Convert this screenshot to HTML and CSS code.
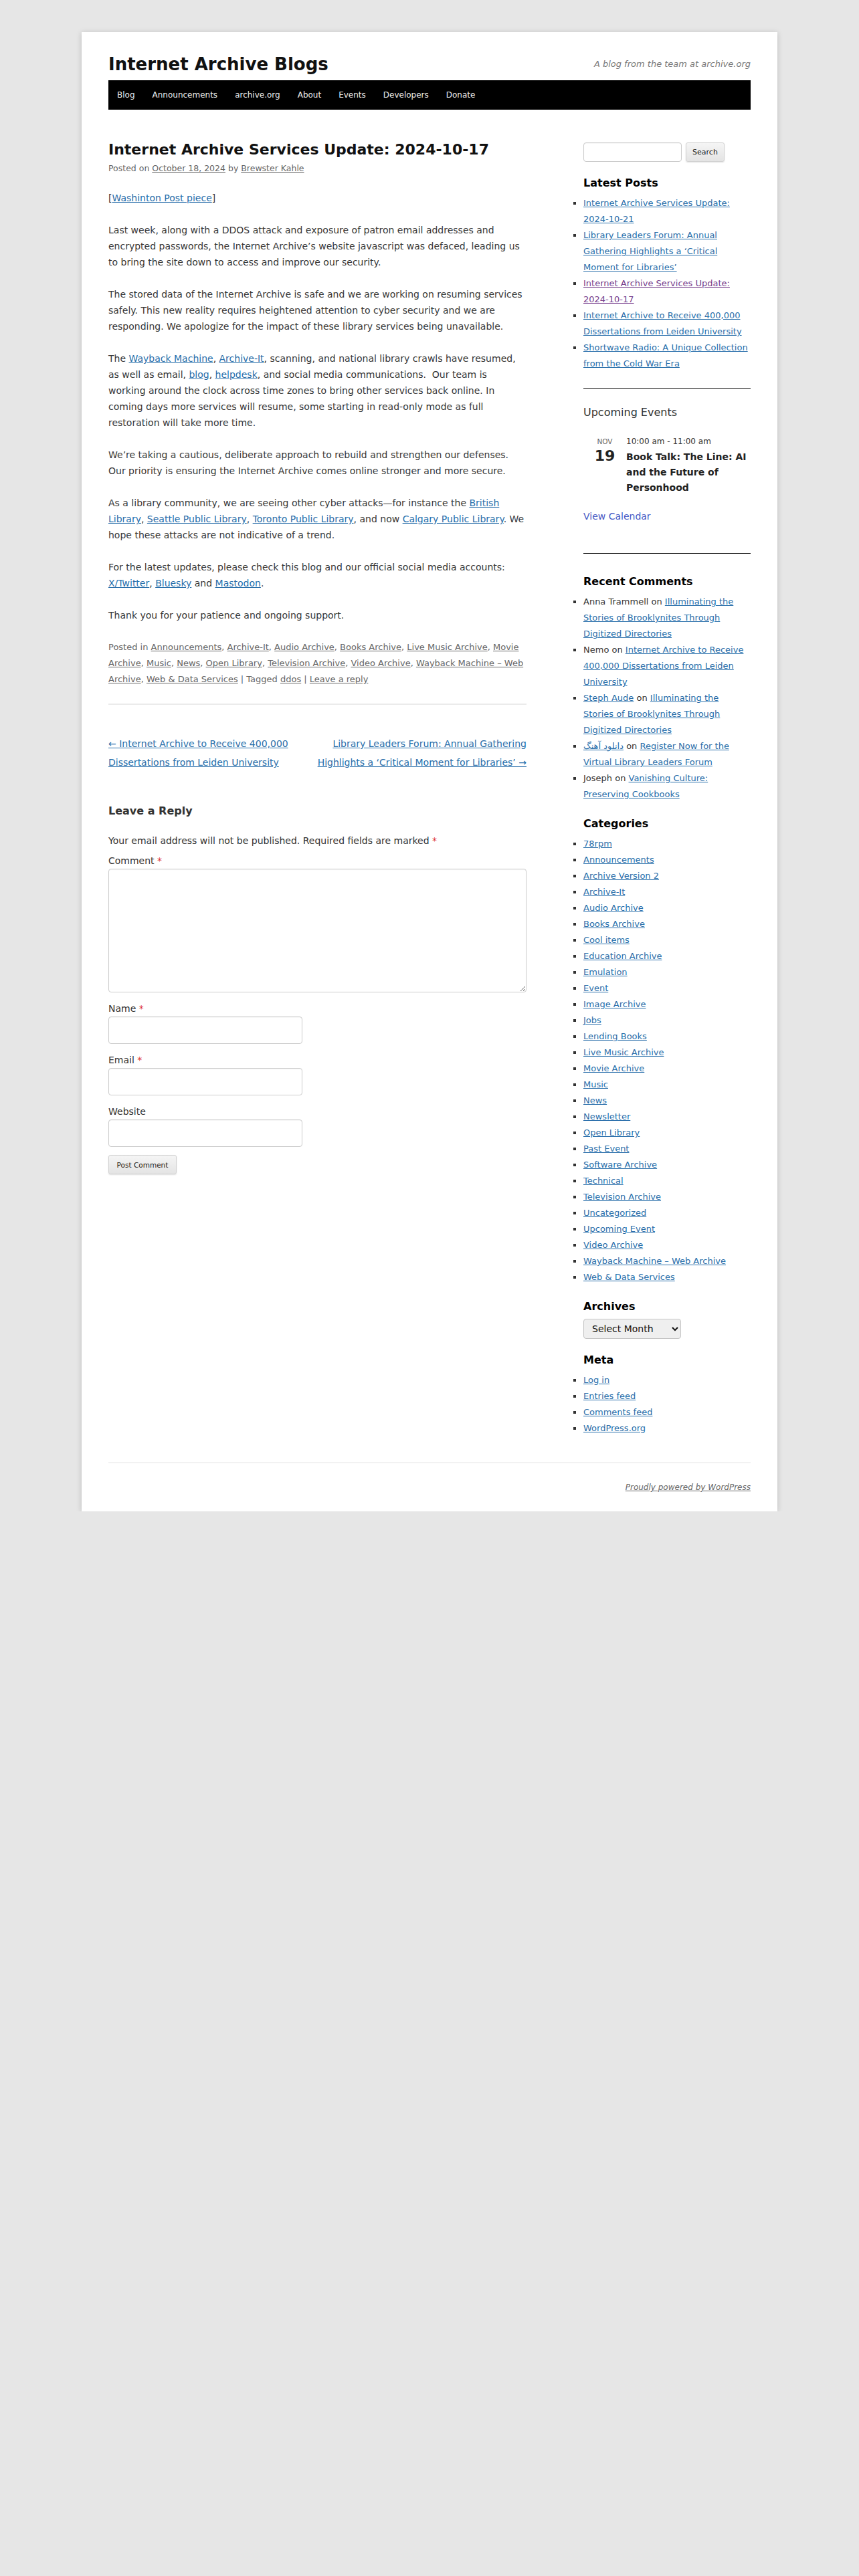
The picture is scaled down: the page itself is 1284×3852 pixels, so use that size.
FILE: index.html
```html
<!DOCTYPE html>
<html lang="en">
<head>
    <meta charset="UTF-8">
    <meta name="viewport" content="width=device-width, initial-scale=1.0">
    <title>Internet Archive Services Update: 2024-10-17 | Internet Archive Blogs</title>
    <link rel="stylesheet" href="styles.css">
</head>
<body>

<div class="page">
    <header class="site-header">
        <div class="branding">
            <h1 class="site-title"><a href="#">Internet Archive Blogs</a></h1>
            <p class="site-description">A blog from the team at archive.org</p>
        </div>
        <nav class="access">
            <ul class="menu">
                <li><a href="#">Blog</a></li>
                <li><a href="#">Announcements</a></li>
                <li><a href="#">archive.org</a></li>
                <li><a href="#">About</a></li>
                <li><a href="#">Events</a></li>
                <li><a href="#">Developers</a></li>
                <li><a href="#">Donate</a></li>
            </ul>
        </nav>
    </header>

    <div class="main">
        <div class="primary">
            <article class="post">
                <header class="entry-header">
                    <h2 class="entry-title">Internet Archive Services Update: 2024-10-17</h2>
                    <div class="entry-meta">Posted on <a href="#">October 18, 2024</a> by <a href="#">Brewster Kahle</a></div>
                </header>

                <div class="entry-content">
                    <p>[<a href="#">Washinton Post piece</a>]</p>
                    <p>Last week, along with a DDOS attack and exposure of patron email addresses and encrypted passwords, the Internet Archive&#8217;s website javascript was defaced, leading us to bring the site down to access and improve our security.</p>
                    <p>The stored data of the Internet Archive is safe and we are working on resuming services safely. This new reality requires heightened attention to cyber security and we are responding. We apologize for the impact of these library services being unavailable.</p>
                    <p>The <a href="#">Wayback Machine</a>, <a href="#">Archive-It</a>, scanning, and national library crawls have resumed, as well as email, <a href="#">blog</a>, <a href="#">helpdesk</a>, and social media communications.&nbsp; Our team is working around the clock across time zones to bring other services back online. In coming days more services will resume, some starting in read-only mode as full restoration will take more time.</p>
                    <p>We&#8217;re taking a cautious, deliberate approach to rebuild and strengthen our defenses. Our priority is ensuring the Internet Archive comes online stronger and more secure.</p>
                    <p>As a library community, we are seeing other cyber attacks&#8212;for instance the <a href="#">British Library</a>, <a href="#">Seattle Public Library</a>, <a href="#">Toronto Public Library</a>, and now <a href="#">Calgary Public Library</a>. We hope these attacks are not indicative of a trend.</p>
                    <p>For the latest updates, please check this blog and our official social media accounts: <a href="#">X/Twitter</a>, <a href="#">Bluesky</a> and <a href="#">Mastodon</a>.</p>
                    <p>Thank you for your patience and ongoing support.</p>
                </div>

                <footer class="entry-footer">
                    Posted in <a href="#">Announcements</a>, <a href="#">Archive-It</a>, <a href="#">Audio Archive</a>, <a href="#">Books Archive</a>, <a href="#">Live Music Archive</a>, <a href="#">Movie Archive</a>, <a href="#">Music</a>, <a href="#">News</a>, <a href="#">Open Library</a>, <a href="#">Television Archive</a>, <a href="#">Video Archive</a>, <a href="#">Wayback Machine &#8211; Web Archive</a>, <a href="#">Web &amp; Data Services</a> | Tagged <a href="#">ddos</a> | <a href="#">Leave a reply</a>
                </footer>
            </article>

            <nav class="nav-single">
                <div class="nav-previous"><a href="#">&larr; Internet Archive to Receive 400,000 Dissertations from Leiden University</a></div>
                <div class="nav-next"><a href="#">Library Leaders Forum: Annual Gathering Highlights a &#8216;Critical Moment for Libraries&#8217; &rarr;</a></div>
            </nav>

            <div class="respond">
                <h3 class="reply-title">Leave a Reply</h3>
                <form class="comment-form">
                    <p class="comment-notes">Your email address will not be published. Required fields are marked <span class="required">*</span></p>
                    <div class="field">
                        <label for="comment">Comment <span class="required">*</span></label>
                        <textarea id="comment" class="comment-box"></textarea>
                    </div>
                    <div class="field">
                        <label for="author">Name <span class="required">*</span></label>
                        <input type="text" id="author" class="text-input">
                    </div>
                    <div class="field">
                        <label for="email">Email <span class="required">*</span></label>
                        <input type="email" id="email" class="text-input">
                    </div>
                    <div class="field">
                        <label for="url">Website</label>
                        <input type="url" id="url" class="text-input">
                    </div>
                    <button type="submit" class="btn post-comment">Post Comment</button>
                </form>
            </div>
        </div>

        <aside class="secondary">
            <form class="search-form">
                <input type="text" class="search-field">
                <button type="submit" class="btn search-submit">Search</button>
            </form>

            <div class="widget">
                <h3 class="widget-title">Latest Posts</h3>
                <ul>
                    <li><a href="#">Internet Archive Services Update: 2024-10-21</a></li>
                    <li><a href="#">Library Leaders Forum: Annual Gathering Highlights a &#8216;Critical Moment for Libraries&#8217;</a></li>
                    <li><a href="#" class="visited">Internet Archive Services Update: 2024-10-17</a></li>
                    <li><a href="#">Internet Archive to Receive 400,000 Dissertations from Leiden University</a></li>
                    <li><a href="#">Shortwave Radio: A Unique Collection from the Cold War Era</a></li>
                </ul>
            </div>

            <div class="widget events-widget">
                <h3 class="events-title">Upcoming Events</h3>
                <div class="event">
                    <div class="event-date">
                        <div class="event-month">Nov</div>
                        <div class="event-day">19</div>
                    </div>
                    <div class="event-info">
                        <div class="event-time">10:00 am - 11:00 am</div>
                        <div class="event-name">Book Talk: The Line: AI and the Future of Personhood</div>
                    </div>
                </div>
                <a href="#" class="view-calendar">View Calendar</a>
            </div>

            <div class="widget">
                <h3 class="widget-title">Recent Comments</h3>
                <ul class="comments-list">
                    <li>Anna Trammell on <a href="#">Illuminating the Stories of Brooklynites Through Digitized Directories</a></li>
                    <li>Nemo on <a href="#">Internet Archive to Receive 400,000 Dissertations from Leiden University</a></li>
                    <li><a href="#">Steph Aude</a> on <a href="#">Illuminating the Stories of Brooklynites Through Digitized Directories</a></li>
                    <li><a href="#" dir="rtl">دانلود آهنگ</a> on <a href="#">Register Now for the Virtual Library Leaders Forum</a></li>
                    <li>Joseph on <a href="#">Vanishing Culture: Preserving Cookbooks</a></li>
                </ul>
            </div>

            <div class="widget">
                <h3 class="widget-title">Categories</h3>
                <ul>
                    <li><a href="#">78rpm</a></li>
                    <li><a href="#">Announcements</a></li>
                    <li><a href="#">Archive Version 2</a></li>
                    <li><a href="#">Archive-It</a></li>
                    <li><a href="#">Audio Archive</a></li>
                    <li><a href="#">Books Archive</a></li>
                    <li><a href="#">Cool items</a></li>
                    <li><a href="#">Education Archive</a></li>
                    <li><a href="#">Emulation</a></li>
                    <li><a href="#">Event</a></li>
                    <li><a href="#">Image Archive</a></li>
                    <li><a href="#">Jobs</a></li>
                    <li><a href="#">Lending Books</a></li>
                    <li><a href="#">Live Music Archive</a></li>
                    <li><a href="#">Movie Archive</a></li>
                    <li><a href="#">Music</a></li>
                    <li><a href="#">News</a></li>
                    <li><a href="#">Newsletter</a></li>
                    <li><a href="#">Open Library</a></li>
                    <li><a href="#">Past Event</a></li>
                    <li><a href="#">Software Archive</a></li>
                    <li><a href="#">Technical</a></li>
                    <li><a href="#">Television Archive</a></li>
                    <li><a href="#">Uncategorized</a></li>
                    <li><a href="#">Upcoming Event</a></li>
                    <li><a href="#">Video Archive</a></li>
                    <li><a href="#">Wayback Machine &#8211; Web Archive</a></li>
                    <li><a href="#">Web &amp; Data Services</a></li>
                </ul>
            </div>

            <div class="widget">
                <h3 class="widget-title">Archives</h3>
                <select class="archive-select">
                    <option>Select Month</option>
                </select>
            </div>

            <div class="widget">
                <h3 class="widget-title">Meta</h3>
                <ul>
                    <li><a href="#">Log in</a></li>
                    <li><a href="#">Entries feed</a></li>
                    <li><a href="#">Comments feed</a></li>
                    <li><a href="#">WordPress.org</a></li>
                </ul>
            </div>
        </aside>
    </div>

    <footer class="site-footer">
        <a href="#">Proudly powered by WordPress</a>
    </footer>
</div>

</body>
</html>
```

FILE: styles.css
```css
body {
    margin: 0;
    background: #e6e6e6;
    font-family: "DejaVu Sans", Verdana, sans-serif;
    font-size: 14px;
    line-height: 24px;
    color: #373737;
}
a {
    color: #286eaa;
}
.page {
    width: 960px;
    margin: 48px auto 0;
    padding: 0 40px 24px;
    background: #fff;
    box-shadow: 0 1px 8px rgba(0, 0, 0, 0.18);
}

/* header */
.branding {
    display: flex;
    justify-content: space-between;
    align-items: center;
    padding-top: 30px;
}
.site-title {
    margin: 0;
    font-size: 26px;
    line-height: 36px;
    font-weight: bold;
}
.site-title a {
    color: #111;
    text-decoration: none;
}
.site-description {
    margin: 0;
    font-size: 13px;
    font-style: italic;
    color: #7a7a7a;
}
.access {
    margin-top: 6px;
    background: #000;
}
.menu {
    list-style: none;
    margin: 0;
    padding: 0;
    display: flex;
}
.menu a {
    display: block;
    padding: 0 13px;
    line-height: 44px;
    font-size: 12px;
    color: #eee;
    text-decoration: none;
}

/* layout */
.main {
    display: flex;
    justify-content: space-between;
    align-items: flex-start;
}
.primary {
    width: 625px;
    padding-top: 44px;
}
.secondary {
    width: 250px;
    padding-top: 49px;
    font-size: 13px;
    color: #333;
}

/* post */
.entry-title {
    margin: 0;
    font-size: 22px;
    line-height: 32px;
    color: #111;
}
.entry-meta {
    font-size: 12.5px;
    line-height: 24px;
    color: #666;
}
.entry-meta a {
    color: #666;
}
.entry-content {
    padding-top: 20px;
}
.entry-content p {
    margin: 0 0 24px;
}
.entry-footer {
    font-size: 13px;
    color: #666;
    padding-bottom: 24px;
    border-bottom: 2px solid #ebebeb;
}
.entry-footer a {
    color: #666;
}
.nav-single {
    display: flex;
    justify-content: space-between;
    margin-top: 44px;
    line-height: 28px;
}
.nav-previous,
.nav-next {
    width: 330px;
}
.nav-next {
    text-align: right;
}

/* comment form */
.respond {
    margin-top: 47px;
}
.reply-title {
    margin: 0 0 20px;
    font-size: 16px;
    line-height: 24px;
    color: #333;
}
.comment-notes {
    margin: 0 0 6px;
    color: #333;
}
.required {
    color: #d33;
}
.field {
    margin-bottom: 12px;
}
.field label {
    display: block;
    color: #333;
}
.comment-box,
.text-input,
.search-field {
    display: block;
    box-sizing: border-box;
    border: 1px solid #ccc;
    border-radius: 4px;
    background: #fff;
    box-shadow: inset 0 1px 1px rgba(0, 0, 0, 0.04);
    font-family: inherit;
}
.comment-box {
    width: 625px;
    height: 185px;
}
.text-input {
    width: 290px;
    height: 41px;
}
.btn {
    box-sizing: border-box;
    border: 1px solid #d2d2d2;
    border-radius: 3px;
    background: linear-gradient(#f5f5f5, #e4e4e4);
    box-shadow: 0 1px 2px rgba(0, 0, 0, 0.12);
    font-family: inherit;
    color: #222;
    cursor: pointer;
}
.post-comment {
    display: block;
    width: 102px;
    height: 29px;
    padding: 0;
    font-size: 10.5px;
}

/* sidebar */
.search-form {
    display: flex;
    gap: 6px;
    margin-bottom: 20px;
}
.search-field {
    width: 147px;
    height: 29px;
}
.search-submit {
    width: 58px;
    height: 29px;
    padding: 0;
    font-size: 11px;
}
.widget {
    margin-bottom: 20px;
}
.widget-title {
    margin: 0 0 6px;
    font-size: 16px;
    line-height: 24px;
    color: #000;
}
.widget ul {
    margin: 0;
    padding: 0;
    list-style: square;
}
.widget a.visited {
    color: #763d8c;
}
.events-widget {
    margin: 24px 0 30px;
    padding: 24px 0 42px;
    border-top: 1px solid #111;
    border-bottom: 1px solid #111;
}
.events-title {
    margin: 0 0 20px;
    font-size: 16px;
    font-weight: normal;
    line-height: 24px;
    color: #333;
}
.event {
    display: flex;
}
.event-date {
    width: 64px;
    flex-shrink: 0;
    text-align: center;
}
.event-month {
    font-size: 10.5px;
    line-height: 23px;
    color: #666;
    text-transform: uppercase;
}
.event-day {
    font-size: 22px;
    font-weight: bold;
    line-height: 20px;
    color: #222;
}
.event-time {
    font-size: 12px;
    line-height: 23px;
    color: #333;
}
.event-name {
    font-size: 14px;
    font-weight: bold;
    line-height: 23px;
    color: #222;
}
.view-calendar {
    display: inline-block;
    margin-top: 19px;
    font-size: 14px;
    color: #4558c4;
    text-decoration: none;
}
.archive-select {
    display: block;
    width: 146px;
    height: 30px;
    border: 1px solid #c4c4c4;
    border-radius: 4px;
    background-color: #efefef;
    font-family: inherit;
    font-size: 14px;
    color: #111;
    padding: 0 8px;
}

/* footer */
.site-footer {
    margin-top: 19px;
    padding-top: 24px;
    border-top: 1px solid #e2e2e2;
    text-align: right;
    font-size: 12px;
    font-style: italic;
}
.site-footer a {
    color: #666;
}
```
